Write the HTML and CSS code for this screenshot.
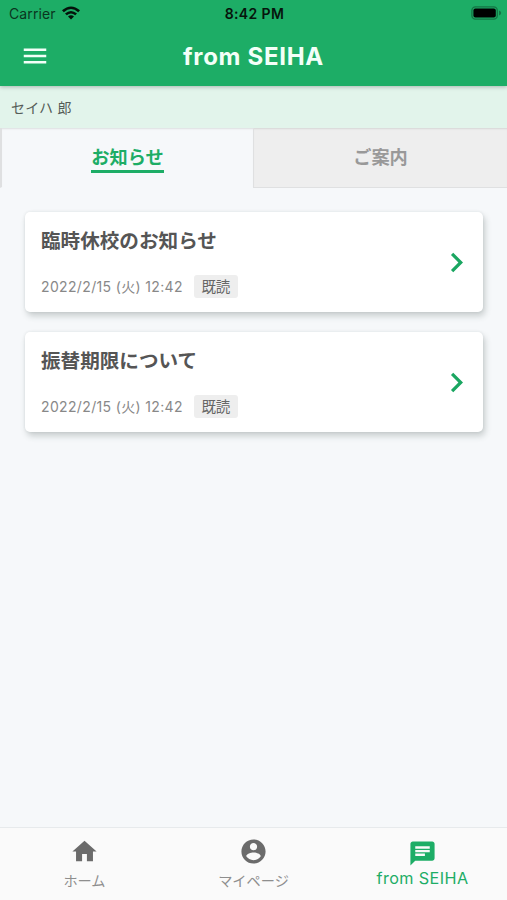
FILE: index.html
```html
<!DOCTYPE html>
<html lang="ja">
<head>
<meta charset="utf-8">
<title>from SEIHA</title>
<link rel="stylesheet" href="styles.css">
</head>
<body>
<div class="app">
  <header class="header">
    <div class="status">
      <div class="carrier"><span>Carrier</span>
        <svg class="wifi" viewBox="0 0 18 14"><path d="M0 4.3Q9-3.3 18 4.3L16.2 6.2Q9 0 1.8 6.2Z"/><path d="M3 7.4Q9 2.4 15 7.4L13.2 9.3Q9 5.8 4.8 9.3Z"/><path d="M6 10.4Q9 8 12 10.4L9 13.6Z"/></svg>
      </div>
      <div class="clock">8:42 PM</div>
      <svg class="battery" viewBox="0 0 31 14"><rect class="shell" x=".9" y=".9" width="25.4" height="12.2" rx="3.6"/><rect x="2.4" y="2.5" width="22.4" height="9" rx="2"/><path class="tip" d="M28 4.5Q30.2 5.4 30.2 7T28 9.5Z"/></svg>
    </div>
    <div class="bar">
      <svg class="menu" viewBox="0 0 24 24"><path d="M3 18h18v-2H3zm0-5h18v-2H3zm0-7v2h18V6z"/></svg>
      <h1>from SEIHA</h1>
      <span></span>
    </div>
  </header>
  <div class="student">セイハ 郎</div>
  <nav class="tabs">
    <div class="tab active"><span>お知らせ</span></div>
    <div class="tab"><span>ご案内</span></div>
  </nav>
  <main class="list">
    <article class="card">
      <div class="info">
        <h2>臨時休校のお知らせ</h2>
        <div class="meta"><time>2022/2/15 (火) 12:42</time><span class="badge">既読</span></div>
      </div>
      <svg class="chevron" viewBox="0 0 24 24"><path d="M10 6 8.59 7.41 13.17 12l-4.58 4.59L10 18l6-6z"/></svg>
    </article>
    <article class="card">
      <div class="info">
        <h2>振替期限について</h2>
        <div class="meta"><time>2022/2/15 (火) 12:42</time><span class="badge">既読</span></div>
      </div>
      <svg class="chevron" viewBox="0 0 24 24"><path d="M10 6 8.59 7.41 13.17 12l-4.58 4.59L10 18l6-6z"/></svg>
    </article>
  </main>
  <nav class="bottom">
    <div class="item">
      <svg viewBox="0 0 24 24"><path d="M10 20v-6h4v6h5v-8h3L12 3 2 12h3v8z"/></svg>
      <span>ホーム</span>
    </div>
    <div class="item">
      <svg viewBox="0 0 24 24"><path d="M12 2C6.48 2 2 6.48 2 12s4.48 10 10 10 10-4.48 10-10S17.52 2 12 2zm0 3c1.66 0 3 1.34 3 3s-1.34 3-3 3-3-1.34-3-3 1.34-3 3-3zm0 14.2c-2.5 0-4.71-1.28-6-3.22.03-1.99 4-3.08 6-3.08 1.99 0 5.97 1.09 6 3.08-1.29 1.94-3.5 3.22-6 3.22z"/></svg>
      <span>マイページ</span>
    </div>
    <div class="item current">
      <svg viewBox="0 0 24 24"><path d="M20 2H4c-1.1 0-1.99.9-1.99 2L2 22l4-4h14c1.1 0 2-.9 2-2V4c0-1.1-.9-2-2-2zM6 9h12v2H6zm8 5H6v-2h8zm4-6H6V6h12z"/></svg>
      <span>from SEIHA</span>
    </div>
  </nav>
</div>
</body>
</html>
```
FILE: styles.css
```css
* { box-sizing: border-box; }
body {
  margin: 0;
  font-family: Inter, "Noto Sans CJK JP", sans-serif;
  background: #f6f8fa;
}
svg { display: block; flex: none; fill: currentColor; }
h1, h2 { margin: 0; }
.app { height: 900px; display: flex; flex-direction: column; overflow: hidden; }

.header {
  height: 86px;
  background: #1dad66;
  box-shadow: 0 1px 4px rgba(0, 0, 0, .25);
  position: relative;
  z-index: 1;
}
.status {
  height: 28px;
  padding: 0 7px 0 9px;
  display: grid;
  grid-template-columns: 1fr auto 1fr;
  align-items: center;
  color: #06140c;
  font-size: 14px;
  line-height: 28px;
}
.carrier { display: flex; align-items: center; gap: 6px; color: #0a3520; letter-spacing: .1px; }
.wifi { width: 18px; height: 14px; color: #04120a; margin-top: -2px; }
.clock { font-weight: 600; font-size: 14px; letter-spacing: .4px; }
.battery { width: 31px; height: 14px; justify-self: end; margin-top: -2px; margin-right: -2px; color: #000; }
.battery .shell { fill: none; stroke: #147545; stroke-width: 1.4; }
.battery .tip { fill: #147545; }
.bar {
  height: 57px;
  padding: 0 20px;
  display: grid;
  grid-template-columns: 1fr auto 1fr;
  align-items: center;
  color: #f3fff8;
}
.menu { width: 30px; height: 30px; margin-top: -1px; }
h1 { font-size: 24px; line-height: 32px; font-weight: 700; letter-spacing: .7px; }

.student {
  height: 42px;
  padding-left: 11px;
  background: #e2f4eb;
  color: #555c58;
  font-size: 14px;
  line-height: 43px;
  letter-spacing: .2px;
}
.tabs { height: 60px; display: grid; grid-template-columns: 253px 254px; }
.tab {
  background: #eee;
  border-left: 1px solid #dfe0e1;
  border-bottom: 1px solid #dfe0e1;
  box-shadow: inset 0 2px 2px -1px rgba(0, 0, 0, .1);
  color: #999;
  text-align: center;
  font-size: 18.2px;
  font-weight: 700;
  padding-top: 17px;
}
.tab span { display: inline-block; line-height: 25px; }
.tab.active {
  background: #f6f8fa;
  color: #1dad66;
  border-left: 2px solid #dfe0e1;
  border-bottom-color: transparent;
}
.tab.active span { border-bottom: 3px solid #1dad66; }

.list { flex: 1; padding: 24px 24px 0 25px; display: flex; flex-direction: column; gap: 20px; }
.card {
  height: 100px;
  padding: 0 7px 0 16px;
  border-radius: 5px;
  background: #fff;
  box-shadow: 2px 4px 6px rgba(50, 70, 65, .23), 0 0 3px rgba(50, 70, 65, .1);
  display: flex;
  justify-content: space-between;
  align-items: center;
}
.info { height: 100px; padding-top: 14px; }
h2 { color: #555; font-size: 19.6px; line-height: 30px; font-weight: 700; }
.meta { margin-top: 19px; height: 23px; display: flex; align-items: center; gap: 11px; color: #888; font-size: 14px; line-height: 23px; }
time { letter-spacing: .35px; }
.badge { padding: 0 7.5px; border-radius: 3px; background: #eee; color: #666; font-size: 14.5px; }
.chevron { width: 39px; height: 39px; color: #1aa661; }

.bottom {
  height: 73px;
  border-top: 1px solid #e7eaec;
  background: #fafafa;
  display: grid;
  grid-template-columns: repeat(3, 1fr);
}
.item { display: flex; flex-direction: column; align-items: center; padding-top: 9px; color: #8e8e8e; font-size: 14.2px; }
.item svg { width: 29px; height: 29px; color: #6b6b6b; }
.item span { line-height: 20px; margin-top: 5px; }
.item.current, .item.current svg { color: #1dad66; }
.item.current { padding-top: 11px; font-size: 16.2px; }
.item.current span { margin-top: 0; letter-spacing: .4px; }
```
